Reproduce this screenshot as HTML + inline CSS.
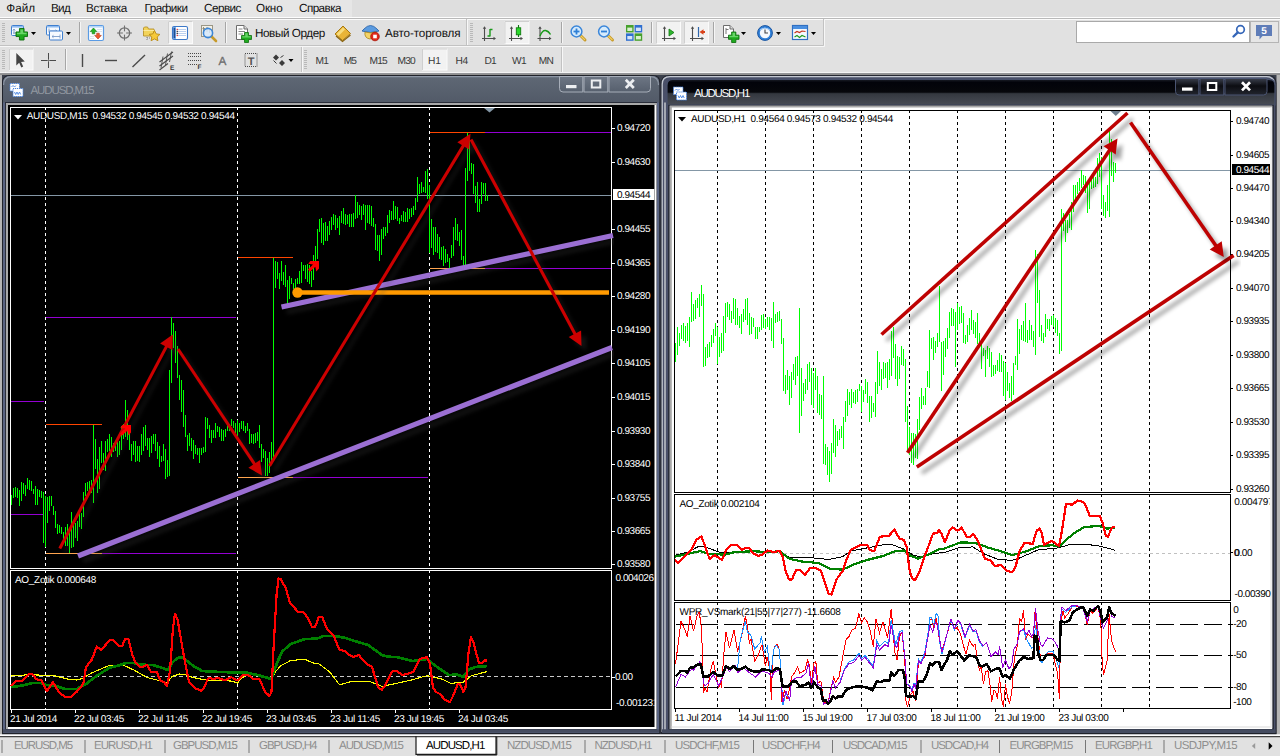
<!DOCTYPE html>
<html><head><meta charset="utf-8"><title>MetaTrader 4</title>
<style>
html,body{margin:0;padding:0;}
body{text-rendering:geometricPrecision;width:1280px;height:756px;overflow:hidden;background:#e1e1e1;position:relative;font-family:"Liberation Sans",sans-serif;}
svg text{font-family:"Liberation Sans",sans-serif;text-rendering:geometricPrecision;}
.abs{position:absolute;}
#menubar{z-index:2;left:0;top:0;width:1280px;height:17px;background:#dedede;}
#menubar .m{position:absolute;z-index:3;top:1px;font-size:11.7px;line-height:15px;color:#111;white-space:nowrap;}
#menuL{position:absolute;left:0;top:0;width:352px;height:17px;background:#e6e6e6;}
#tb{left:0;top:18px;width:1280px;height:55px;background:#e1e1e1;}
.tbtxt{position:absolute;z-index:3;font-size:11.7px;line-height:14px;color:#111;white-space:nowrap;}
.tf{position:absolute;z-index:3;top:55.8px;font-size:10.2px;line-height:12px;color:#3a3a3a;white-space:nowrap;}
#tabs{left:0;top:736px;width:1280px;height:20px;background:#e1e1e1;}
.tab{position:absolute;top:3px;font-size:11px;line-height:14px;color:#8a8a8a;white-space:nowrap;}
.sep{position:absolute;top:3px;width:1px;height:13px;background:#6e6e6e;}
</style></head><body>

<div id="menubar" class="abs"><div id="menuL"></div>
<span class="m" style="left:6.3px;letter-spacing:-0.016px">Файл</span>
<span class="m" style="left:51.0px;letter-spacing:-0.722px">Вид</span>
<span class="m" style="left:86.0px;letter-spacing:-0.355px">Вставка</span>
<span class="m" style="left:144.5px;letter-spacing:-0.501px">Графики</span>
<span class="m" style="left:204.0px;letter-spacing:-0.511px">Сервис</span>
<span class="m" style="left:256.0px;letter-spacing:-0.172px">Окно</span>
<span class="m" style="left:299.0px;letter-spacing:-0.557px">Справка</span>
</div>
<div id="tb" class="abs"></div>
<span class="tbtxt" style="left:255px;top:27px;letter-spacing:-0.413px">Новый Ордер</span>
<span class="tbtxt" style="left:385px;top:27px;letter-spacing:-0.135px">Авто-торговля</span>
<span class="tf" style="left:315.5px;letter-spacing:-0.835px">M1</span>
<span class="tf" style="left:343.7px;letter-spacing:-0.935px">M5</span>
<span class="tf" style="left:369.5px;letter-spacing:-0.781px">M15</span>
<span class="tf" style="left:397.5px;letter-spacing:-0.781px">M30</span>
<span class="tf" style="left:428.0px;letter-spacing:-0.169px">H1</span>
<span class="tf" style="left:455.5px;letter-spacing:-0.269px">H4</span>
<span class="tf" style="left:484.5px;letter-spacing:-0.769px">D1</span>
<span class="tf" style="left:512.0px;letter-spacing:-0.650px">W1</span>
<span class="tf" style="left:538.7px;letter-spacing:-0.781px">MN</span>
<div id="tabs" class="abs"></div>
<svg class="abs" style="left:0;top:0" width="1280" height="756" viewBox="0 0 1280 756">
<defs>
<filter id="shw" x="-10%" y="-10%" width="130%" height="130%"><feGaussianBlur in="SourceGraphic" stdDeviation="1.9"/></filter>
<linearGradient id="tInact" x1="0" y1="0" x2="0" y2="1"><stop offset="0" stop-color="#5f6875"/><stop offset="1" stop-color="#525a68"/></linearGradient>
<linearGradient id="tAct" x1="0" y1="0" x2="0" y2="1"><stop offset="0" stop-color="#1c1f28"/><stop offset="0.12" stop-color="#02030a"/><stop offset="0.5" stop-color="#06070b"/><stop offset="0.56" stop-color="#34383f"/><stop offset="1" stop-color="#484c55"/></linearGradient>
<linearGradient id="btnI" x1="0" y1="0" x2="0" y2="1"><stop offset="0" stop-color="#6d7684"/><stop offset="1" stop-color="#565f6d"/></linearGradient>
<linearGradient id="btnA" x1="0" y1="0" x2="0" y2="1"><stop offset="0" stop-color="#3a3f4c"/><stop offset="0.45" stop-color="#0c0d12"/><stop offset="1" stop-color="#22252e"/></linearGradient>
</defs>
<rect x="0" y="17" width="1280" height="1" fill="#fdfdfd"/><rect x="0" y="18" width="1280" height="1" fill="#b9b9b9"/><rect x="0" y="19" width="1280" height="1" fill="#fbfbfb"/><path d="M0 45.5 H823.5 V19" fill="none" stroke="#c2c2c2" stroke-width="1"/><path d="M0 46.5 H824.5 V19" fill="none" stroke="#f7f7f7" stroke-width="1"/><path d="M466.5 19 V45" stroke="#c2c2c2"/><path d="M467.5 19 V45" stroke="#f7f7f7"/><path d="M301.5 47 V72" stroke="#c2c2c2"/><path d="M302.5 47 V72" stroke="#f7f7f7"/><path d="M561.5 47 V72" stroke="#c2c2c2"/><path d="M562.5 47 V72" stroke="#f7f7f7"/><rect x="2.0" y="23.0" width="3" height="1" fill="#b9b9b9"/><rect x="2.0" y="25.0" width="3" height="1" fill="#b9b9b9"/><rect x="2.0" y="27.0" width="3" height="1" fill="#b9b9b9"/><rect x="2.0" y="29.0" width="3" height="1" fill="#b9b9b9"/><rect x="2.0" y="31.0" width="3" height="1" fill="#b9b9b9"/><rect x="2.0" y="33.0" width="3" height="1" fill="#b9b9b9"/><rect x="2.0" y="35.0" width="3" height="1" fill="#b9b9b9"/><rect x="2.0" y="37.0" width="3" height="1" fill="#b9b9b9"/><rect x="2.0" y="39.0" width="3" height="1" fill="#b9b9b9"/><rect x="2.0" y="41.0" width="3" height="1" fill="#b9b9b9"/><rect x="470.0" y="23.0" width="3" height="1" fill="#b9b9b9"/><rect x="470.0" y="25.0" width="3" height="1" fill="#b9b9b9"/><rect x="470.0" y="27.0" width="3" height="1" fill="#b9b9b9"/><rect x="470.0" y="29.0" width="3" height="1" fill="#b9b9b9"/><rect x="470.0" y="31.0" width="3" height="1" fill="#b9b9b9"/><rect x="470.0" y="33.0" width="3" height="1" fill="#b9b9b9"/><rect x="470.0" y="35.0" width="3" height="1" fill="#b9b9b9"/><rect x="470.0" y="37.0" width="3" height="1" fill="#b9b9b9"/><rect x="470.0" y="39.0" width="3" height="1" fill="#b9b9b9"/><rect x="470.0" y="41.0" width="3" height="1" fill="#b9b9b9"/><rect x="2.0" y="50.0" width="3" height="1" fill="#b9b9b9"/><rect x="2.0" y="52.0" width="3" height="1" fill="#b9b9b9"/><rect x="2.0" y="54.0" width="3" height="1" fill="#b9b9b9"/><rect x="2.0" y="56.0" width="3" height="1" fill="#b9b9b9"/><rect x="2.0" y="58.0" width="3" height="1" fill="#b9b9b9"/><rect x="2.0" y="60.0" width="3" height="1" fill="#b9b9b9"/><rect x="2.0" y="62.0" width="3" height="1" fill="#b9b9b9"/><rect x="2.0" y="64.0" width="3" height="1" fill="#b9b9b9"/><rect x="2.0" y="66.0" width="3" height="1" fill="#b9b9b9"/><rect x="2.0" y="68.0" width="3" height="1" fill="#b9b9b9"/><rect x="304.0" y="50.0" width="3" height="1" fill="#b9b9b9"/><rect x="304.0" y="52.0" width="3" height="1" fill="#b9b9b9"/><rect x="304.0" y="54.0" width="3" height="1" fill="#b9b9b9"/><rect x="304.0" y="56.0" width="3" height="1" fill="#b9b9b9"/><rect x="304.0" y="58.0" width="3" height="1" fill="#b9b9b9"/><rect x="304.0" y="60.0" width="3" height="1" fill="#b9b9b9"/><rect x="304.0" y="62.0" width="3" height="1" fill="#b9b9b9"/><rect x="304.0" y="64.0" width="3" height="1" fill="#b9b9b9"/><rect x="304.0" y="66.0" width="3" height="1" fill="#b9b9b9"/><rect x="304.0" y="68.0" width="3" height="1" fill="#b9b9b9"/><rect x="79.0" y="22.0" width="1" height="21.0" fill="#a6a6a6"/><rect x="80.0" y="22.0" width="1" height="21.0" fill="#f6f6f6"/><rect x="225.0" y="22.0" width="1" height="21.0" fill="#a6a6a6"/><rect x="226.0" y="22.0" width="1" height="21.0" fill="#f6f6f6"/><rect x="561.0" y="22.0" width="1" height="21.0" fill="#a6a6a6"/><rect x="562.0" y="22.0" width="1" height="21.0" fill="#f6f6f6"/><rect x="651.0" y="22.0" width="1" height="21.0" fill="#a6a6a6"/><rect x="652.0" y="22.0" width="1" height="21.0" fill="#f6f6f6"/><rect x="713.0" y="22.0" width="1" height="21.0" fill="#a6a6a6"/><rect x="714.0" y="22.0" width="1" height="21.0" fill="#f6f6f6"/><rect x="65.0" y="49.0" width="1" height="21.0" fill="#a6a6a6"/><rect x="66.0" y="49.0" width="1" height="21.0" fill="#f6f6f6"/><rect x="168.5" y="21.5" width="24.0" height="22.0" fill="#f2f2f2" stroke="#fbfbfb" stroke-width="1"/><path d="M168.5 43.5 V21.5 H192.5" fill="none" stroke="#cfcfcf" stroke-width="1"/><rect x="505.0" y="21.5" width="24.0" height="22.0" fill="#f2f2f2" stroke="#fbfbfb" stroke-width="1"/><path d="M505.0 43.5 V21.5 H529.0" fill="none" stroke="#cfcfcf" stroke-width="1"/><rect x="656.5" y="21.5" width="24.0" height="22.0" fill="#f2f2f2" stroke="#fbfbfb" stroke-width="1"/><path d="M656.5 43.5 V21.5 H680.5" fill="none" stroke="#cfcfcf" stroke-width="1"/><rect x="684.5" y="21.5" width="24.0" height="22.0" fill="#f2f2f2" stroke="#fbfbfb" stroke-width="1"/><path d="M684.5 43.5 V21.5 H708.5" fill="none" stroke="#cfcfcf" stroke-width="1"/><rect x="9.5" y="49.0" width="23.5" height="21.0" fill="#f2f2f2" stroke="#fbfbfb" stroke-width="1"/><path d="M9.5 70.0 V49.0 H33.0" fill="none" stroke="#cfcfcf" stroke-width="1"/><rect x="422.5" y="49.0" width="24.5" height="21.0" fill="#f2f2f2" stroke="#fbfbfb" stroke-width="1"/><path d="M422.5 70.0 V49.0 H447.0" fill="none" stroke="#cfcfcf" stroke-width="1"/><g transform="translate(11.0,25.0)"><rect x="0.5" y="0.5" width="12" height="10" rx="1" fill="#f6faff" stroke="#3f7fcf"/><rect x="1" y="1" width="11" height="1.6" fill="#8dbaf0"/><path d="M3 4 V9 M1.8 5.5 L3 4 L4.2 5.5 M2 8 H6" stroke="#7d9cc8" stroke-width="0.9" fill="none"/><g transform="translate(5.0,3.5) scale(1.15)"><path d="M3 0 h4 v3 h3 v4 h-3 v3 h-4 v-3 h-3 v-4 h3 z" fill="#1faa1f" stroke="#0c6e0c" stroke-width="0.8"/><path d="M3.8 0.8 h2.4 v3 h3 v1.2 h-8.4 v-1.2 h3 z" fill="#7be07b" opacity="0.8"/></g></g><path d="M31.0 32.0 h5 l-2.5 3 z" fill="#000"/><g transform="translate(46.0,25.0)"><rect x="0.5" y="0.5" width="13" height="9.5" rx="1" fill="#f6faff" stroke="#3f7fcf"/><rect x="1" y="1" width="12" height="1.5" fill="#8dbaf0"/><path d="M3 6 H11 M3 3.5 V7.5 M9.5 4.8 L11 6 L9.5 7.2" stroke="#7d9cc8" stroke-width="0.9" fill="none"/><rect x="3.5" y="6" width="13" height="9" rx="1" fill="#f6faff" stroke="#3f7fcf"/><path d="M6 11.5 H14 M14 9.5 V13.5 M7.5 10.3 L6 11.5 L7.5 12.7" stroke="#7d9cc8" stroke-width="0.9" fill="none"/></g><path d="M66.0 32.0 h5 l-2.5 3 z" fill="#000"/><g transform="translate(88.0,25.0)"><rect x="0.5" y="0.5" width="15" height="15" rx="1.5" fill="#fbfdff" stroke="#5a9be4" stroke-width="1.2"/><rect x="1.2" y="1.2" width="13.6" height="1.3" fill="#a9cdf5"/><path d="M9 4.5 H14 M9 6.5 H14 M2 11.5 H6 M2 13.5 H6" stroke="#d5dde8" stroke-width="0.8"/><path d="M5.5 3 l-3.3 3.6 h2 v2.2 h2.6 v-2.2 h2 z" fill="#22b422" stroke="#0d7b0d" stroke-width="0.6"/><path d="M10 14 l-3.3 -3.6 h2 v-2.2 h2.6 v2.2 h2 z" fill="#f0562c" stroke="#b03412" stroke-width="0.6"/></g><g transform="translate(117.0,25.5)"><circle cx="7.5" cy="7.5" r="5.2" fill="none" stroke="#707070" stroke-width="1.3"/><path d="M7.5 0 V15 M0 7.5 H15" stroke="#707070" stroke-width="1.1"/><circle cx="7.5" cy="7.5" r="1.8" fill="#e1e1e1"/></g><g transform="translate(143.0,25.0)"><path d="M0.5 3 V11 H11 V4 H5.5 L4.5 2 H1.5 Z" fill="#f2d35a" stroke="#b8922a" stroke-width="0.9"/><path d="M0.5 5.5 H11" stroke="#fbe89a" stroke-width="1"/><path d="M4 12 V15 M4 13 H7" stroke="#777" stroke-width="0.9" stroke-dasharray="1 1"/><path d="M11.5 5.5 l1.7 3.4 3.7 .5 -2.7 2.6 .7 3.7 -3.4 -1.8 -3.4 1.8 .7 -3.7 -2.7 -2.6 3.7 -.5 z" fill="#f6c93a" stroke="#b98a14" stroke-width="0.9"/></g><g transform="translate(172.0,26.0)"><rect x="0.5" y="0.5" width="15" height="13" rx="1.5" fill="#fff" stroke="#3b78c8" stroke-width="1.1"/><rect x="1.2" y="1.2" width="2.6" height="11.6" fill="#3d83d8"/><rect x="1.8" y="2" width="1" height="10" fill="#1c3f78"/><path d="M6 3.5 H14 M6 5.5 H14 M6 7.5 H14 M6 9.5 H14" stroke="#a9c4ea" stroke-width="0.8"/><rect x="4.6" y="2.8" width="1.3" height="1.3" fill="#d33"/><rect x="4.6" y="4.8" width="1.3" height="1.3" fill="#333"/><rect x="4.6" y="6.8" width="1.3" height="1.3" fill="#333"/><rect x="4.6" y="8.8" width="1.3" height="1.3" fill="#d33"/></g><g transform="translate(200.0,25.0)"><rect x="1.5" y="0.5" width="11" height="11" fill="#f3f0e6" stroke="#9a9685"/><path d="M3.5 2 V9 M2.5 3.5 H5 M7 2 V7 M9.5 3 V8" stroke="#8a8672" stroke-width="0.9"/><path d="M11 11 L16 16" stroke="#c79a2a" stroke-width="2.6" stroke-linecap="round"/><circle cx="8" cy="8" r="4.6" fill="#d6e9fb" fill-opacity="0.85" stroke="#3b86d8" stroke-width="1.6"/></g><g transform="translate(235.0,25.0)"><path d="M1.5 0.5 H9 L12.5 4 V14.5 H1.5 Z" fill="#fff" stroke="#6d6d6d"/><path d="M9 0.5 V4 H12.5" fill="#ddd" stroke="#6d6d6d"/><path d="M3.5 4 H7.5 M3.5 6.5 H10 M3.5 9 H8" stroke="#888" stroke-width="1"/><g transform="translate(6.5,7.5) scale(1.00)"><path d="M3 0 h4 v3 h3 v4 h-3 v3 h-4 v-3 h-3 v-4 h3 z" fill="#1faa1f" stroke="#0c6e0c" stroke-width="0.8"/><path d="M3.8 0.8 h2.4 v3 h3 v1.2 h-8.4 v-1.2 h3 z" fill="#7be07b" opacity="0.8"/></g></g><g transform="translate(334.0,25.0)"><path d="M1 9 L9 1 L16.5 8.5 L8.5 15.5 Z" fill="#e9b437" stroke="#a67912" stroke-width="1"/><path d="M2.5 9 L9 2.6 L11 4.4 L4.5 11 Z" fill="#f7dc7e"/><path d="M2 11 L8.5 16.5 L16.5 10" fill="none" stroke="#8a6410" stroke-width="1.2"/></g><g transform="translate(362.0,24.0)"><path d="M2 5 Q8.5 -2 15 5 L17 7 Q8.5 10 0 7 Z" fill="#5b9be0" stroke="#2d66ad" stroke-width="0.9"/><path d="M3 8 Q2 14 8 15 Q14 14 14 8 Q8.5 9.8 3 8Z" fill="#f3d46a" stroke="#b08d24" stroke-width="0.9"/><circle cx="13" cy="12.5" r="4.3" fill="#e02a1a" stroke="#a81408" stroke-width="0.8"/><rect x="11.2" y="10.7" width="3.6" height="3.6" fill="#fff"/></g><g transform="translate(481.0,26.0)"><path d="M3.5 1.5 V15 M1 12.5 H14" stroke="#4d4d4d" stroke-width="1.1" fill="none"/><path d="M3.5 0.3 l-1.7 2.5 h3.4 z M15 12.5 l-2.5 -1.7 v3.4 z" fill="#4d4d4d"/><path d="M9 3 V10.5 M9 3.5 H11.5 M6.5 10 H9" stroke="#1a9a1a" stroke-width="1.4" fill="none"/></g><g transform="translate(508.0,26.0)"><path d="M3.5 1.5 V15 M1 12.5 H14" stroke="#4d4d4d" stroke-width="1.1" fill="none"/><path d="M3.5 0.3 l-1.7 2.5 h3.4 z M15 12.5 l-2.5 -1.7 v3.4 z" fill="#4d4d4d"/><path d="M10.5 -1 V11" stroke="#0f7a0f" stroke-width="1.1"/><rect x="8.3" y="1.8" width="4.4" height="7" fill="#2ad82a" stroke="#0f7a0f" stroke-width="0.9"/></g><g transform="translate(536.5,26.0)"><path d="M3.5 1.5 V15 M1 12.5 H14" stroke="#4d4d4d" stroke-width="1.1" fill="none"/><path d="M3.5 0.3 l-1.7 2.5 h3.4 z M15 12.5 l-2.5 -1.7 v3.4 z" fill="#4d4d4d"/><path d="M3.5 10 Q6 4 9 4.5 T14 8.5" stroke="#1a9a1a" stroke-width="1.4" fill="none"/></g><g transform="translate(570.0,25.0)"><path d="M10 10 L15 15" stroke="#c79a2a" stroke-width="3" stroke-linecap="round"/><path d="M10.3 10.3 L14.6 14.6" stroke="#f3d264" stroke-width="1.2" stroke-linecap="round"/><circle cx="6.5" cy="6.5" r="5.4" fill="#d6ebfc" stroke="#3a86da" stroke-width="1.5"/><path d="M3.5 6.5 H9.5" stroke="#2f7fd6" stroke-width="1.8"/><path d="M6.5 3.5 V9.5" stroke="#2f7fd6" stroke-width="1.8"/></g><g transform="translate(597.5,25.0)"><path d="M10 10 L15 15" stroke="#c79a2a" stroke-width="3" stroke-linecap="round"/><path d="M10.3 10.3 L14.6 14.6" stroke="#f3d264" stroke-width="1.2" stroke-linecap="round"/><circle cx="6.5" cy="6.5" r="5.4" fill="#d6ebfc" stroke="#3a86da" stroke-width="1.5"/><path d="M3.5 6.5 H9.5" stroke="#2f7fd6" stroke-width="1.8"/></g><g transform="translate(626.0,25.0)"><rect x="0" y="0" width="7.6" height="7.4" fill="#46a12c"/><rect x="8.6" y="0" width="7.6" height="7.4" fill="#2f6fd0"/><rect x="0" y="8.4" width="7.6" height="7.4" fill="#2f6fd0"/><rect x="8.6" y="8.4" width="7.6" height="7.4" fill="#46a12c"/><rect x="1.3" y="2.6" width="5" height="3.4" fill="#d9efcf"/><rect x="9.9" y="2.6" width="5" height="3.4" fill="#d6e4f8"/><rect x="1.3" y="11" width="5" height="3.4" fill="#d6e4f8"/><rect x="9.9" y="11" width="5" height="3.4" fill="#d9efcf"/></g><g transform="translate(661.0,26.0)"><path d="M3.5 1.5 V15 M1 12.5 H14" stroke="#4d4d4d" stroke-width="1.1" fill="none"/><path d="M3.5 0.3 l-1.7 2.5 h3.4 z M15 12.5 l-2.5 -1.7 v3.4 z" fill="#4d4d4d"/><path d="M8 3 V10 L13 6.5 Z" fill="#2fb52f" stroke="#107a10" stroke-width="0.8"/></g><g transform="translate(689.0,26.0)"><path d="M3.5 1.5 V15 M1 12.5 H14" stroke="#4d4d4d" stroke-width="1.1" fill="none"/><path d="M3.5 0.3 l-1.7 2.5 h3.4 z M15 12.5 l-2.5 -1.7 v3.4 z" fill="#4d4d4d"/><path d="M9.5 1 V11" stroke="#2d66ad" stroke-width="1.2"/><path d="M10.5 6 L14.5 3.2 V5 H16 V7 H14.5 V8.8 Z" fill="#d9421a"/></g><g transform="translate(722.0,25.0)"><path d="M1.5 0.5 H8 L11.5 4 V12.5 H1.5 Z" fill="#fff" stroke="#6d6d6d"/><path d="M8 0.5 V4 H11.5" fill="#ddd" stroke="#6d6d6d"/><path d="M4 3 V9 M4 4.5 H6.5" stroke="#777" stroke-width="1"/><g transform="translate(6.5,7.0) scale(1.05)"><path d="M3 0 h4 v3 h3 v4 h-3 v3 h-4 v-3 h-3 v-4 h3 z" fill="#1faa1f" stroke="#0c6e0c" stroke-width="0.8"/><path d="M3.8 0.8 h2.4 v3 h3 v1.2 h-8.4 v-1.2 h3 z" fill="#7be07b" opacity="0.8"/></g></g><path d="M741.0 32.0 h5 l-2.5 3 z" fill="#000"/><g transform="translate(757.0,25.0)"><circle cx="8" cy="8" r="7.4" fill="#2f7fd8" stroke="#1a55a0" stroke-width="1"/><circle cx="8" cy="8" r="5.2" fill="#f4f8fc"/><path d="M8 4.5 V8 H11" stroke="#444" stroke-width="1.1" fill="none"/><path d="M3 5 Q8 1.5 13 5" stroke="#9cc6f3" stroke-width="1.2" fill="none"/></g><path d="M776.0 32.0 h5 l-2.5 3 z" fill="#000"/><g transform="translate(792.0,25.0)"><rect x="0.5" y="0.5" width="15" height="14" fill="#f4f9ff" stroke="#2f6fc2" stroke-width="1.2"/><rect x="1" y="1" width="14" height="3" fill="#4a8fe0"/><path d="M2.5 8 L5 6.5 L7.5 7.5 L10 6 L13.5 6.5" stroke="#c8321a" stroke-width="1.2" fill="none"/><path d="M2.5 12 L5 10.5 L7.5 12.5 L10 10.5 L13.5 12" stroke="#1f9a1f" stroke-width="1.2" fill="none"/></g><path d="M811.0 32.0 h5 l-2.5 3 z" fill="#000"/><rect x="1076.5" y="21.5" width="173" height="21" fill="#fff" stroke="#a9a9a9"/><rect x="1250.5" y="21.5" width="28" height="21" fill="#e6e6e6" stroke="#b5b5b5"/><g transform="translate(1232.0,24.0)"><circle cx="8.5" cy="5.5" r="3.8" fill="#fff" stroke="#3566b8" stroke-width="1.7"/><path d="M5.8 8.4 L1.5 12.5" stroke="#3566b8" stroke-width="2.4" stroke-linecap="round"/></g><g transform="translate(1256.0,25.0)"><path d="M0 0 H16 V11 H6.5 L3.5 14.5 V11 H0 Z" fill="#5f7db8"/><text x="8" y="9.3" font-size="10" font-weight="bold" fill="#fff" text-anchor="middle">5</text></g><path d="M16.3 53 V65.5 L19.2 62.8 L21.3 67.5 L23.2 66.6 L21.1 62 L24.8 61.5 Z" fill="#444"/><g shape-rendering="crispEdges"><path d="M48.5 53 V68 M41 60.5 H56" stroke="#4a4a4a" stroke-width="1"/><rect x="47" y="59" width="3" height="3" fill="#e1e1e1"/><path d="M48.5 59 V62 M47 60.5 H50" stroke="#777" stroke-width="1"/></g><path d="M82.5 54 V67" stroke="#4a4a4a" stroke-width="1.4"/><path d="M105 60.5 H117" stroke="#4a4a4a" stroke-width="1.4"/><path d="M132.5 67 L145 55" stroke="#4a4a4a" stroke-width="1.4"/><path d="M159.5 66 L173 56 M159.5 62 L173 52 M159.5 70 L168 63.5" stroke="#4a4a4a" stroke-width="1.1" fill="none"/><path d="M163 56.5 L161 68 M167.5 53.5 L165.5 65 M171.5 51.5 L169.5 62" stroke="#4a4a4a" stroke-width="0.9"/><text x="170" y="70" font-size="6.5" font-weight="bold" fill="#333">E</text><path d="M188 53.5 H201 M188 56.5 H201 M188 60.5 H201 M188 64.5 H197" stroke="#4a4a4a" stroke-width="1" stroke-dasharray="1 1" shape-rendering="crispEdges"/><text x="197.5" y="69" font-size="6.5" font-weight="bold" fill="#333">F</text><text x="218.5" y="64.6" font-size="11.8" fill="#6e6e6e" stroke="#6e6e6e" stroke-width="0.3">A</text><rect x="245" y="53.5" width="12" height="13" fill="none" stroke="#4a4a4a" stroke-width="1" stroke-dasharray="1 1"/><text x="251" y="64.5" font-size="11" font-weight="bold" fill="#555" text-anchor="middle">T</text><path d="M273 57.5 l3 -3 3 3 -3 3 z M279 63 l3 -3 3 3 -3 3z" fill="#3a3a3a"/><path d="M273.5 60.5 l3 3 M280.5 57.5 l3 -2" stroke="#3a3a3a" stroke-width="1"/><path d="M288.5 59.0 h5 l-2.5 3 z" fill="#000"/>
<rect x="1.5" y="740" width="1" height="13" fill="#777"/><rect x="84.5" y="740" width="1" height="13" fill="#777"/><rect x="164.5" y="740" width="1" height="13" fill="#777"/><rect x="248.5" y="740" width="1" height="13" fill="#777"/><rect x="328.5" y="740" width="1" height="13" fill="#777"/><rect x="584.5" y="740" width="1" height="13" fill="#777"/><rect x="664.5" y="740" width="1" height="13" fill="#777"/><rect x="753.0" y="740" width="1" height="13" fill="#777"/><rect x="832.0" y="740" width="1" height="13" fill="#777"/><rect x="920.5" y="740" width="1" height="13" fill="#777"/><rect x="999.0" y="740" width="1" height="13" fill="#777"/><rect x="1085.0" y="740" width="1" height="13" fill="#777"/><rect x="1163.5" y="740" width="1" height="13" fill="#777"/><rect x="416" y="735" width="80" height="19" fill="#fff"/><path d="M416 736 V754.3 H496 V736" fill="none" stroke="#1a1a1a" stroke-width="1.2"/><path d="M417 755 H496.8 V737" fill="none" stroke="#1a1a1a" stroke-width="1"/><text x="14.0" y="749" font-size="11.5" fill="#8e8e8e" letter-spacing="-1.081">EURUSD,M5</text><text x="94.0" y="749" font-size="11.5" fill="#8e8e8e" letter-spacing="-0.940">EURUSD,H1</text><text x="173.0" y="749" font-size="11.5" fill="#8e8e8e" letter-spacing="-1.013">GBPUSD,M15</text><text x="259.0" y="749" font-size="11.5" fill="#8e8e8e" letter-spacing="-0.996">GBPUSD,H4</text><text x="339.0" y="749" font-size="11.5" fill="#8e8e8e" letter-spacing="-1.013">AUDUSD,M15</text><text x="426.0" y="749" font-size="11.5" fill="#000" letter-spacing="-0.884">AUDUSD,H1</text><text x="507.0" y="749" font-size="11.5" fill="#8e8e8e" letter-spacing="-0.948">NZDUSD,M15</text><text x="594.5" y="749" font-size="11.5" fill="#8e8e8e" letter-spacing="-0.979">NZDUSD,H1</text><text x="675.0" y="749" font-size="11.5" fill="#8e8e8e" letter-spacing="-0.821">USDCHF,M15</text><text x="762.0" y="749" font-size="11.5" fill="#8e8e8e" letter-spacing="-0.726">USDCHF,H4</text><text x="843.0" y="749" font-size="11.5" fill="#8e8e8e" letter-spacing="-1.063">USDCAD,M15</text><text x="931.0" y="749" font-size="11.5" fill="#8e8e8e" letter-spacing="-1.051">USDCAD,H4</text><text x="1009.5" y="749" font-size="11.5" fill="#8e8e8e" letter-spacing="-0.965">EURGBP,M15</text><text x="1095.0" y="749" font-size="11.5" fill="#8e8e8e" letter-spacing="-0.887">EURGBP,H1</text><text x="1174.0" y="749" font-size="11.5" fill="#8e8e8e" letter-spacing="-0.645">USDJPY,M15</text><path d="M1251.8 746 l3.4 -3 v6 z" fill="#9a9a9a"/><path d="M1272.5 746 l-3.8 -3.8 v7.6 z" fill="#000"/>
<rect x="0" y="73" width="1280" height="663" fill="#3a3f4b"/>
<rect x="0" y="72" width="1280" height="1.5" fill="#f4f4f4"/>
<rect x="0" y="73.5" width="1280" height="1.5" fill="#8f8f8f"/>
<rect x="0" y="75" width="2" height="660" fill="#b4b4b4"/>
<rect x="1276.5" y="75" width="3.5" height="660" fill="#b4b4b4"/>
<rect x="0" y="734.3" width="1280" height="1.9" fill="#fdfdfd"/>
<rect x="0" y="736.2" width="1280" height="1" fill="#1a1a1a"/>
<path d="M2.0 734.0 V83.0 Q2.0 75.0 10.0 75.0 H652.5 Q660.5 75.0 660.5 83.0 V734.0 Z" fill="#20232b"/>
<path d="M3.0 733.0 V83.0 Q3.0 76.0 10.0 76.0 H652.2 Q659.2 76.0 659.2 83.0 V733.0 Z" fill="#5a6482"/>
<path d="M3.0 102.5 V83.0 Q3.0 76.0 10.0 76.0 H652.2 Q659.2 76.0 659.2 83.0 V102.5 Z" fill="url(#tInact)"/>
<path d="M3.6 85.0 Q3.6 76.6 11.0 76.6 H650.5 Q658.5 76.6 658.5 85.0" fill="none" stroke="#8d96a4" stroke-width="1.2"/>
<rect x="5" y="102" width="652" height="628" fill="#2a2e3a"/>
<rect x="6" y="103" width="650.5" height="626" fill="#fff"/>
<path d="M6 729 V103 H656.5 V105 H8 V729 Z" fill="#a9a9a9"/>
<rect x="3" y="729.3" width="656" height="3.4" fill="#454c60"/>
<path d="M661.0 734.0 V83.3 Q661.0 75.3 669.0 75.3 H1268.5 Q1276.5 75.3 1276.5 83.3 V734.0 Z" fill="#20232b"/>
<path d="M661.8 733.0 V83.6 Q661.8 76.1 669.3 76.1 H1268.0 Q1275.5 76.1 1275.5 83.6 V733.0 Z" fill="#4a5069"/>
<path d="M662.2 732.0 V84.3 Q662.2 76.7 670.0 76.7 H1266.5 Q1274.5 76.7 1274.5 85.3" fill="none" stroke="#c3c8d1" stroke-width="1.3"/>
<path d="M667.0 105.0 V85.3 Q667.0 79.3 673.0 79.3 H1269.0 Q1275.0 79.3 1275.0 85.3 V105.0 Z" fill="url(#tAct)" stroke="#48516c" stroke-width="1.2"/>
<rect x="664" y="102.5" width="2" height="628" fill="#a4a8b2"/>
<rect x="667" y="104.5" width="1608" height="0" fill="#2a2e3a"/>
<rect x="668" y="104.8" width="606" height="625.5" fill="#2a2e3a"/>
<rect x="669.8" y="105.8" width="602.4" height="623.2" fill="#fff"/>
<path d="M669.8 729 V105.8 H1272.2 V107.6 H671.8 V729 Z" fill="#a9a9a9"/>
<path d="M1270.3 107.6 V726 H671.8 V728 H1272.2 V107.6 Z" fill="#ececec"/>
<rect x="662" y="729.3" width="1613.500" height="0" fill="#454c60"/>
<rect x="662" y="729.3" width="613.5" height="3.4" fill="#454c60"/>
<g transform="translate(9.5,83.0)"><rect x="0.5" y="0.5" width="9.5" height="7.5" fill="#fff" stroke="#4b86e0" stroke-width="1" stroke-dasharray="1.2 0.8"/><path d="M2 4 l1.5 -1.5 1.5 1.5 1.5 -1.5" stroke="#4b86e0" stroke-width="0.9" fill="none"/><rect x="3.5" y="5.5" width="10" height="8" fill="#fff" stroke="#4b86e0" stroke-width="1" stroke-dasharray="1.2 0.8"/><path d="M5 9 l1.2 2.5 1.3 -2.5 1.2 2.5 1.3 -2.5 1.2 2.5" stroke="#4b86e0" stroke-width="0.9" fill="none"/></g><text x="30.5" y="94" font-size="11.5" fill="#9298a1" letter-spacing="-1.113">AUDUSD,M15</text><path d="M559.5 76.5 V88.5 Q559.5 92.0 563.0 92.0 H582.8 V76.5 Z" fill="url(#btnI)" stroke="#a7aeb9" stroke-width="1"/><rect x="584.0" y="76.5" width="23.8" height="15.5" fill="url(#btnI)" stroke="#a7aeb9" stroke-width="1"/><path d="M609.0 76.5 V92.0 H647.0 Q650.5 92.0 650.5 88.5 V76.5 Z" fill="url(#btnI)" stroke="#a7aeb9" stroke-width="1"/><rect x="566.0" y="85.0" width="10.5" height="3.2" fill="#eceef1"/><rect x="591.8" y="80.5" width="8.5" height="7" fill="none" stroke="#eceef1" stroke-width="2"/><path d="M625.8 79.8 l8 8.2 M633.8 79.8 l-8 8.2" stroke="#eceef1" stroke-width="2.7"/><g transform="translate(673.0,86.5)"><rect x="0.5" y="0.5" width="9.5" height="7.5" fill="#fff" stroke="#4b86e0" stroke-width="1" stroke-dasharray="1.2 0.8"/><path d="M2 4 l1.5 -1.5 1.5 1.5 1.5 -1.5" stroke="#4b86e0" stroke-width="0.9" fill="none"/><rect x="3.5" y="5.5" width="10" height="8" fill="#fff" stroke="#4b86e0" stroke-width="1" stroke-dasharray="1.2 0.8"/><path d="M5 9 l1.2 2.5 1.3 -2.5 1.2 2.5 1.3 -2.5 1.2 2.5" stroke="#4b86e0" stroke-width="0.9" fill="none"/></g><text x="694" y="97" font-size="11.5" fill="#fff" letter-spacing="-1.273">AUDUSD,H1</text><path d="M1175.5 78.5 V91.5 Q1175.5 95.0 1179.0 95.0 H1198.8 V78.5 Z" fill="url(#btnA)" stroke="#4b5572" stroke-width="1"/><rect x="1200.0" y="78.5" width="23.8" height="16.5" fill="url(#btnA)" stroke="#4b5572" stroke-width="1"/><path d="M1225.0 78.5 V95.0 H1263.5 Q1267.0 95.0 1267.0 91.5 V78.5 Z" fill="url(#btnA)" stroke="#4b5572" stroke-width="1"/><rect x="1182.0" y="87.5" width="10.5" height="3.2" fill="#fff"/><rect x="1207.8" y="83.0" width="8.5" height="7" fill="none" stroke="#fff" stroke-width="2"/><path d="M1242.0 82.2 l8 8.2 M1250.0 82.2 l-8 8.2" stroke="#fff" stroke-width="2.7"/>
<rect x="8.0" y="105.0" width="646.5" height="622.0" fill="#000"/>
<g shape-rendering="crispEdges">
<path d="M10.5 107.5 H611.5 V568.5 H10.5 Z" fill="none" stroke="#fff" stroke-width="1"/>
<path d="M10.5 570.5 H611.5 V709.5 H10.5 Z" fill="none" stroke="#fff" stroke-width="1"/>
<line x1="45.5" y1="107" x2="45.5" y2="568" stroke="#fff" stroke-width="1" stroke-dasharray="3 3"/>
<line x1="45.5" y1="570" x2="45.5" y2="709" stroke="#fff" stroke-width="1" stroke-dasharray="3 3"/>
<line x1="237.5" y1="107" x2="237.5" y2="568" stroke="#fff" stroke-width="1" stroke-dasharray="3 3"/>
<line x1="237.5" y1="570" x2="237.5" y2="709" stroke="#fff" stroke-width="1" stroke-dasharray="3 3"/>
<line x1="429.5" y1="107" x2="429.5" y2="568" stroke="#fff" stroke-width="1" stroke-dasharray="3 3"/>
<line x1="429.5" y1="570" x2="429.5" y2="709" stroke="#fff" stroke-width="1" stroke-dasharray="3 3"/>
<line x1="11" y1="195.5" x2="611" y2="195.5" stroke="#8497a6" stroke-width="1"/>
<line x1="11.0" y1="401.5" x2="44.0" y2="401.5" stroke="#9400d3" stroke-width="1"/>
<line x1="11.0" y1="514.5" x2="44.0" y2="514.5" stroke="#9400d3" stroke-width="1"/>
<line x1="46.0" y1="317.5" x2="236.0" y2="317.5" stroke="#9400d3" stroke-width="1"/>
<line x1="46.0" y1="553.5" x2="236.0" y2="553.5" stroke="#9400d3" stroke-width="1"/>
<line x1="46.0" y1="553.5" x2="102.0" y2="553.5" stroke="#ffa54f" stroke-width="1"/>
<line x1="46.0" y1="424.5" x2="102.0" y2="424.5" stroke="#ff4500" stroke-width="1"/>
<line x1="238.0" y1="257.5" x2="293.0" y2="257.5" stroke="#ff4500" stroke-width="1"/>
<line x1="238.0" y1="477.5" x2="293.0" y2="477.5" stroke="#ffa54f" stroke-width="1"/>
<line x1="293.0" y1="477.5" x2="428.0" y2="477.5" stroke="#9400d3" stroke-width="1"/>
<line x1="430.0" y1="132.5" x2="485.0" y2="132.5" stroke="#ff4500" stroke-width="1"/>
<line x1="485.0" y1="132.5" x2="611.0" y2="132.5" stroke="#9400d3" stroke-width="1"/>
<line x1="430.0" y1="268.5" x2="485.0" y2="268.5" stroke="#ffa54f" stroke-width="1"/>
<line x1="485.0" y1="268.5" x2="611.0" y2="268.5" stroke="#9400d3" stroke-width="1"/>
<path d="M11.5 495V505M13.5 488V498M15.5 487V497M17.5 488V498M19.5 490V506M21.5 482V501M23.5 483V494M25.5 485V496M27.5 478V489M29.5 480V490M31.5 481V491M33.5 489V494M35.5 486V505M37.5 489V505M39.5 490V497M41.5 491V498M43.5 492V543M45.5 496V547M47.5 497V523M49.5 496V511M51.5 496V506M53.5 506V515M55.5 511V528M57.5 524V534M59.5 525V533M61.5 527V534M63.5 532V539M65.5 527V546M67.5 524V546M69.5 531V553M71.5 512V548M73.5 522V547M75.5 523V538M77.5 521V541M79.5 513V527M81.5 513V529M83.5 492V517M85.5 483V496M87.5 482V491M89.5 481V490M91.5 480V493M93.5 425V503M95.5 439V469M97.5 459V493M99.5 447V489M101.5 441V463M103.5 453V470M105.5 441V471M107.5 439V452M109.5 434V451M111.5 437V457M113.5 443V452M115.5 445V451M117.5 442V457M119.5 441V455M121.5 426V450M123.5 424V439M125.5 400V437M127.5 410V440M129.5 433V450M131.5 444V461M133.5 441V455M135.5 441V462M137.5 446V461M139.5 446V462M141.5 434V455M143.5 427V451M145.5 425V446M147.5 438V450M149.5 438V457M151.5 436V453M153.5 434V444M155.5 434V451M157.5 442V459M159.5 446V467M161.5 456V462M163.5 444V461M165.5 449V479M167.5 460V477M169.5 370V476M171.5 317V383M173.5 323V348M175.5 331V363M177.5 346V378M179.5 375V400M181.5 380V412M183.5 390V427M185.5 415V437M187.5 435V451M189.5 433V446M191.5 438V451M193.5 440V459M195.5 445V454M197.5 448V455M199.5 448V463M201.5 448V455M203.5 447V453M205.5 417V452M207.5 418V429M209.5 425V438M211.5 430V443M213.5 430V438M215.5 423V438M217.5 426V432M219.5 427V437M221.5 429V441M223.5 430V441M225.5 429V437M227.5 423V431M229.5 424V431M231.5 419V426M233.5 421V428M235.5 423V433M237.5 420V436M239.5 423V432M241.5 421V429M243.5 421V431M245.5 426V433M247.5 423V431M249.5 429V444M251.5 434V443M253.5 434V444M255.5 433V443M257.5 432V441M259.5 425V448M261.5 444V462M263.5 449V458M265.5 451V476M267.5 458V476M269.5 452V473M271.5 442V461M273.5 258V461M275.5 261V288M277.5 262V279M279.5 273V289M281.5 261V281M283.5 272V285M285.5 265V287M287.5 280V304M289.5 276V299M291.5 278V284M293.5 283V289M295.5 279V288M297.5 278V284M299.5 271V284M301.5 262V283M303.5 265V271M305.5 265V279M307.5 264V282M309.5 265V284M311.5 271V287M313.5 255V280M315.5 246V261M317.5 229V259M319.5 219V232M321.5 218V243M323.5 223V245M325.5 222V241M327.5 226V241M329.5 221V235M331.5 217V230M333.5 214V225M335.5 215V230M337.5 218V228M339.5 216V235M341.5 211V223M343.5 208V224M345.5 214V225M347.5 215V224M349.5 214V227M351.5 214V227M353.5 213V227M355.5 195V219M357.5 202V218M359.5 205V215M361.5 206V220M363.5 204V215M365.5 205V230M367.5 205V223M369.5 205V224M371.5 206V226M373.5 218V227M375.5 224V250M377.5 235V251M379.5 235V261M381.5 229V255M383.5 227V239M385.5 227V236M387.5 215V233M389.5 210V223M391.5 211V220M393.5 201V220M395.5 206V219M397.5 207V221M399.5 218V224M401.5 215V221M403.5 211V222M405.5 212V222M407.5 208V222M409.5 209V219M411.5 208V217M413.5 206V215M415.5 198V210M417.5 177V202M419.5 184V194M421.5 182V193M423.5 187V192M425.5 171V193M427.5 169V199M429.5 185V253M431.5 219V248M433.5 227V255M435.5 227V252M437.5 234V253M439.5 237V259M441.5 247V260M443.5 246V266M445.5 249V263M447.5 254V262M449.5 258V268M451.5 245V258M453.5 227V256M455.5 218V240M457.5 224V241M459.5 232V246M461.5 230V260M463.5 256V265M465.5 168V266M467.5 133V181M469.5 136V171M471.5 163V174M473.5 164V194M475.5 186V203M477.5 182V212M479.5 199V212M481.5 182V204M483.5 183V194M485.5 183V201M487.5 195V201" stroke="#00ff00" stroke-width="1" fill="none"/>
<line x1="612" y1="128.5" x2="614.5" y2="128.5" stroke="#fff" stroke-width="1"/>
<line x1="612" y1="162.0" x2="614.5" y2="162.0" stroke="#fff" stroke-width="1"/>
<line x1="612" y1="229.5" x2="614.5" y2="229.5" stroke="#fff" stroke-width="1"/>
<line x1="612" y1="263.0" x2="614.5" y2="263.0" stroke="#fff" stroke-width="1"/>
<line x1="612" y1="296.5" x2="614.5" y2="296.5" stroke="#fff" stroke-width="1"/>
<line x1="612" y1="330.5" x2="614.5" y2="330.5" stroke="#fff" stroke-width="1"/>
<line x1="612" y1="363.5" x2="614.5" y2="363.5" stroke="#fff" stroke-width="1"/>
<line x1="612" y1="397.5" x2="614.5" y2="397.5" stroke="#fff" stroke-width="1"/>
<line x1="612" y1="431.0" x2="614.5" y2="431.0" stroke="#fff" stroke-width="1"/>
<line x1="612" y1="464.5" x2="614.5" y2="464.5" stroke="#fff" stroke-width="1"/>
<line x1="612" y1="498.0" x2="614.5" y2="498.0" stroke="#fff" stroke-width="1"/>
<line x1="612" y1="531.5" x2="614.5" y2="531.5" stroke="#fff" stroke-width="1"/>
<line x1="612" y1="564.5" x2="614.5" y2="564.5" stroke="#fff" stroke-width="1"/>
<line x1="612" y1="677.5" x2="614.5" y2="677.5" stroke="#fff"/>
<line x1="11.5" y1="710" x2="11.5" y2="713" stroke="#fff"/>
<line x1="75.5" y1="710" x2="75.5" y2="713" stroke="#fff"/>
<line x1="139.5" y1="710" x2="139.5" y2="713" stroke="#fff"/>
<line x1="203.5" y1="710" x2="203.5" y2="713" stroke="#fff"/>
<line x1="267.5" y1="710" x2="267.5" y2="713" stroke="#fff"/>
<line x1="331.5" y1="710" x2="331.5" y2="713" stroke="#fff"/>
<line x1="395.5" y1="710" x2="395.5" y2="713" stroke="#fff"/>
<line x1="459.5" y1="710" x2="459.5" y2="713" stroke="#fff"/>
</g>
<text x="617.0" y="131" fill="#fff" font-size="10.00" text-anchor="start" font-weight="normal" letter-spacing="-0.450" >0.94720</text>
<text x="617.0" y="165" fill="#fff" font-size="10.00" text-anchor="start" font-weight="normal" letter-spacing="-0.450" >0.94630</text>
<text x="617.0" y="232" fill="#fff" font-size="10.00" text-anchor="start" font-weight="normal" letter-spacing="-0.450" >0.94455</text>
<text x="617.0" y="266" fill="#fff" font-size="10.00" text-anchor="start" font-weight="normal" letter-spacing="-0.450" >0.94365</text>
<text x="617.0" y="299" fill="#fff" font-size="10.00" text-anchor="start" font-weight="normal" letter-spacing="-0.450" >0.94280</text>
<text x="617.0" y="333" fill="#fff" font-size="10.00" text-anchor="start" font-weight="normal" letter-spacing="-0.450" >0.94190</text>
<text x="617.0" y="366" fill="#fff" font-size="10.00" text-anchor="start" font-weight="normal" letter-spacing="-0.450" >0.94105</text>
<text x="617.0" y="400" fill="#fff" font-size="10.00" text-anchor="start" font-weight="normal" letter-spacing="-0.450" >0.94015</text>
<text x="617.0" y="434" fill="#fff" font-size="10.00" text-anchor="start" font-weight="normal" letter-spacing="-0.450" >0.93930</text>
<text x="617.0" y="467" fill="#fff" font-size="10.00" text-anchor="start" font-weight="normal" letter-spacing="-0.450" >0.93840</text>
<text x="617.0" y="501" fill="#fff" font-size="10.00" text-anchor="start" font-weight="normal" letter-spacing="-0.450" >0.93755</text>
<text x="617.0" y="534" fill="#fff" font-size="10.00" text-anchor="start" font-weight="normal" letter-spacing="-0.450" >0.93665</text>
<text x="617.0" y="567" fill="#fff" font-size="10.00" text-anchor="start" font-weight="normal" letter-spacing="-0.450" >0.93580</text>
<rect x="613" y="189" width="41.3" height="11" fill="#fff"/>
<text x="617.0" y="198" fill="#000" font-size="10.00" text-anchor="start" font-weight="normal" letter-spacing="-0.450" >0.94544</text>
<text x="615.5" y="581" fill="#fff" font-size="10.00" text-anchor="start" font-weight="normal" letter-spacing="-0.464" >0.004026</text>
<text x="615.0" y="680" fill="#fff" font-size="10.00" text-anchor="start" font-weight="normal" letter-spacing="-0.491" >0.00</text>
<svg x="612" y="690" width="42.5" height="20"><text x="4" y="16" fill="#fff" font-size="10.00" letter-spacing="-0.338">-0.001231</text></svg>
<text x="10.0" y="722" fill="#fff" font-size="10.00" text-anchor="start" font-weight="normal" letter-spacing="-0.428" >21 Jul 2014</text>
<text x="74.0" y="722" fill="#fff" font-size="10.00" text-anchor="start" font-weight="normal" letter-spacing="-0.374" >22 Jul 03:45</text>
<text x="138.0" y="722" fill="#fff" font-size="10.00" text-anchor="start" font-weight="normal" letter-spacing="-0.312" >22 Jul 11:45</text>
<text x="202.0" y="722" fill="#fff" font-size="10.00" text-anchor="start" font-weight="normal" letter-spacing="-0.374" >22 Jul 19:45</text>
<text x="266.0" y="722" fill="#fff" font-size="10.00" text-anchor="start" font-weight="normal" letter-spacing="-0.374" >23 Jul 03:45</text>
<text x="330.0" y="722" fill="#fff" font-size="10.00" text-anchor="start" font-weight="normal" letter-spacing="-0.312" >23 Jul 11:45</text>
<text x="394.0" y="722" fill="#fff" font-size="10.00" text-anchor="start" font-weight="normal" letter-spacing="-0.374" >23 Jul 19:45</text>
<text x="458.0" y="722" fill="#fff" font-size="10.00" text-anchor="start" font-weight="normal" letter-spacing="-0.374" >24 Jul 03:45</text>
<path d="M14 115 H22 L18 119.5 Z" fill="#fff"/>
<text x="26.7" y="119" fill="#fff" font-size="10.00" text-anchor="start" font-weight="normal" letter-spacing="-0.347" >AUDUSD,M15  0.94532 0.94545 0.94532 0.94544</text>
<text x="15.0" y="583" fill="#fff" font-size="10.00" text-anchor="start" font-weight="normal" letter-spacing="-0.304" >AO_Zotik 0.000648</text>
<path d="M484 108 H495 L489.5 112.5 Z" fill="#8497a6"/>
<line x1="11" y1="676.5" x2="611" y2="676.5" stroke="#c8c8c8" stroke-width="1" stroke-dasharray="4 3" shape-rendering="crispEdges"/>
<polyline shape-rendering="crispEdges" points="11.0,676.0 29.0,674.7 53.8,675.6 67.0,678.9 76.7,680.0 82.4,678.5 92.0,672.8 109.0,665.5 124.0,665.5 133.8,670.0 147.0,677.5 158.6,680.4 167.0,683.0 172.0,676.6 179.5,674.0 185.0,674.7 192.9,677.5 208.0,680.4 231.0,681.0 237.6,683.0 240.0,680.0 246.0,674.6 256.0,674.6 271.5,680.0 275.5,671.6 280.6,665.9 290.8,660.4 305.0,659.4 313.0,662.9 319.0,663.9 329.4,671.6 339.5,684.8 350.7,681.7 370.0,681.7 382.0,686.4 396.4,683.4 412.7,679.7 426.9,675.7 441.0,678.7 451.0,683.4 463.4,682.0 471.6,675.7 486.8,671.6" fill="none" stroke="#ffff00" stroke-width="1.1"/>
<polyline shape-rendering="crispEdges" points="11.0,687.0 21.4,685.7 32.9,682.9 40.5,683.0 46.0,685.0 55.7,686.0 65.0,689.0 76.7,689.0 86.0,684.0 95.7,676.6 109.0,668.0 118.6,665.5 126.0,662.9 133.8,663.0 143.0,664.8 152.9,665.0 162.4,668.0 168.0,670.0 172.0,663.0 176.7,658.5 181.4,657.0 187.0,661.0 194.8,667.0 202.4,671.0 219.5,672.0 238.6,672.4 247.0,672.6 260.0,675.7 271.5,679.0 273.5,672.6 277.6,661.4 282.7,651.0 290.8,644.0 305.0,639.0 317.0,638.7 323.0,636.0 335.5,636.0 345.6,638.0 353.7,640.7 368.0,645.0 382.0,655.0 388.0,656.8 396.4,657.0 412.7,661.0 426.9,659.0 435.0,665.5 449.0,675.0 457.0,674.6 463.4,677.0 468.5,669.6 475.6,667.0 487.4,666.0" fill="none" stroke="#008000" stroke-width="2.7" stroke-linejoin="round"/>
<polyline shape-rendering="crispEdges" points="11.0,686.0 15.7,681.0 22.4,681.0 29.0,674.0 32.0,674.0 36.7,679.4 41.4,680.4 47.0,691.0 52.9,682.3 59.5,692.8 65.0,697.0 71.0,696.8 76.7,691.8 83.3,684.0 86.0,667.0 92.0,659.4 96.7,646.5 101.0,650.0 110.0,640.0 112.9,640.0 118.6,645.7 122.4,645.7 125.0,638.9 128.5,638.9 132.0,653.7 134.8,661.3 139.5,666.7 143.0,666.7 147.0,665.0 151.0,671.8 156.7,671.8 160.5,681.0 164.0,682.0 167.0,686.0 170.0,671.0 172.9,629.0 175.0,613.7 177.6,619.4 182.4,648.0 186.0,667.0 189.0,682.0 194.8,688.0 201.4,690.9 204.0,688.0 208.0,678.5 210.0,677.5 212.9,679.0 218.6,678.0 225.0,680.4 231.0,677.0 237.6,680.4 240.0,677.7 244.0,674.6 248.0,675.0 253.0,678.7 259.0,678.7 265.4,692.0 269.5,696.0 271.5,692.0 273.5,649.0 276.6,594.4 278.6,578.6 280.6,579.0 285.7,588.0 289.8,602.5 297.9,611.7 303.0,611.7 307.0,616.7 312.0,627.0 315.0,627.0 319.0,616.7 322.0,616.7 327.0,629.0 333.4,635.0 339.5,650.0 344.6,650.9 350.7,656.0 353.7,657.0 358.8,655.0 366.0,663.5 372.0,667.0 378.0,686.8 381.6,689.9 385.0,685.8 392.0,671.6 396.4,671.0 402.5,675.0 408.6,673.6 413.7,671.6 419.8,659.0 426.9,657.0 430.0,663.5 433.0,687.8 436.0,692.0 440.0,694.0 445.0,700.0 450.0,702.0 453.0,696.0 458.0,683.8 460.0,683.8 463.4,692.0 465.5,687.8 468.5,653.0 471.0,637.0 473.6,643.0 479.0,663.5 482.7,662.5 484.8,660.4 487.4,660.4" fill="none" stroke="#ff0000" stroke-width="2.2" stroke-linejoin="round"/>
<svg x="8" y="104" width="606" height="466" viewBox="8 104 606 466">
<g transform="translate(5,5)" filter="url(#shw)" opacity="0.27">
<line x1="78.0" y1="556.0" x2="612.0" y2="347.5" stroke-width="5.2" stroke="#444"/>
</g>
<line x1="78.0" y1="556.0" x2="612.0" y2="347.5" stroke-width="5.2" stroke="#9b6fd3"/>
<g transform="translate(5,5)" filter="url(#shw)" opacity="0.27">
<line x1="281.5" y1="307.0" x2="613.0" y2="235.5" stroke-width="5.2" stroke="#444"/>
</g>
<line x1="281.5" y1="307.0" x2="613.0" y2="235.5" stroke-width="5.2" stroke="#9b6fd3"/>
<g transform="translate(4,5)" filter="url(#shw)" opacity="0.4"><line x1="297" y1="292.5" x2="609" y2="292.5" stroke="#555" stroke-width="4.6"/></g>
<line x1="297" y1="292.5" x2="609" y2="292.5" stroke="#ff9a00" stroke-width="4.6"/>
<circle cx="297.5" cy="292.5" r="5.2" fill="#ff9a00"/>
<g transform="translate(5,5)" filter="url(#shw)" opacity="0.27">
<line x1="59.8" y1="548.5" x2="167.2" y2="345.1" stroke-width="3.1" stroke="#444"/>
<path d="M172.8 334.5 L172.5 350.1 L160.1 343.6 Z" fill="#444"/>
</g>
<line x1="59.8" y1="548.5" x2="167.2" y2="345.1" stroke-width="3.1" stroke="#cc0000"/>
<path d="M172.8 334.5 L172.5 350.1 L160.1 343.6 Z" fill="#cc0000"/>
<g transform="translate(5,5)" filter="url(#shw)" opacity="0.27">
<line x1="178.0" y1="349.0" x2="255.4" y2="465.5" stroke-width="3.1" stroke="#444"/>
<path d="M262.0 475.5 L248.4 467.7 L260.1 460.0 Z" fill="#444"/>
</g>
<line x1="178.0" y1="349.0" x2="255.4" y2="465.5" stroke-width="3.1" stroke="#cc0000"/>
<path d="M262.0 475.5 L248.4 467.7 L260.1 460.0 Z" fill="#cc0000"/>
<g transform="translate(5,5)" filter="url(#shw)" opacity="0.27">
<line x1="269.5" y1="466.0" x2="464.3" y2="144.1" stroke-width="3.1" stroke="#444"/>
<path d="M470.5 133.8 L469.2 149.4 L457.3 142.2 Z" fill="#444"/>
</g>
<line x1="269.5" y1="466.0" x2="464.3" y2="144.1" stroke-width="3.1" stroke="#cc0000"/>
<path d="M470.5 133.8 L469.2 149.4 L457.3 142.2 Z" fill="#cc0000"/>
<g transform="translate(5,5)" filter="url(#shw)" opacity="0.27">
<line x1="471.0" y1="139.5" x2="575.8" y2="335.4" stroke-width="3.1" stroke="#444"/>
<path d="M581.5 346.0 L568.7 337.0 L581.1 330.4 Z" fill="#444"/>
</g>
<line x1="471.0" y1="139.5" x2="575.8" y2="335.4" stroke-width="3.1" stroke="#cc0000"/>
<path d="M581.5 346.0 L568.7 337.0 L581.1 330.4 Z" fill="#cc0000"/>
<path transform="translate(120.0,425.0)" d="M2.3 0 H11 V7.5 L8.3 10.5 L7.3 5.8 L2 10.8 L0 8.5 L5 3.6 L0.3 2.8 Z" fill="#ff0000"/>
<path transform="translate(308.0,261.0)" d="M2.3 0 H11 V7.5 L8.3 10.5 L7.3 5.8 L2 10.8 L0 8.5 L5 3.6 L0.3 2.8 Z" fill="#ff0000"/>
</svg>
<g shape-rendering="crispEdges">
<path d="M674.5 110.5 H1230.5 V492.5 H674.5 Z" fill="none" stroke="#000"/>
<path d="M674.5 494.5 H1230.5 V600.5 H674.5 Z" fill="none" stroke="#000"/>
<path d="M674.5 602.5 H1230.5 V708.5 H674.5 Z" fill="none" stroke="#000"/>
<line x1="717.5" y1="110" x2="717.5" y2="492" stroke="#000" stroke-dasharray="3 3"/>
<line x1="717.5" y1="494" x2="717.5" y2="600" stroke="#000" stroke-dasharray="3 3"/>
<line x1="717.5" y1="602" x2="717.5" y2="708" stroke="#000" stroke-dasharray="3 3"/>
<line x1="765.5" y1="110" x2="765.5" y2="492" stroke="#000" stroke-dasharray="3 3"/>
<line x1="765.5" y1="494" x2="765.5" y2="600" stroke="#000" stroke-dasharray="3 3"/>
<line x1="765.5" y1="602" x2="765.5" y2="708" stroke="#000" stroke-dasharray="3 3"/>
<line x1="813.5" y1="110" x2="813.5" y2="492" stroke="#000" stroke-dasharray="3 3"/>
<line x1="813.5" y1="494" x2="813.5" y2="600" stroke="#000" stroke-dasharray="3 3"/>
<line x1="813.5" y1="602" x2="813.5" y2="708" stroke="#000" stroke-dasharray="3 3"/>
<line x1="861.5" y1="110" x2="861.5" y2="492" stroke="#000" stroke-dasharray="3 3"/>
<line x1="861.5" y1="494" x2="861.5" y2="600" stroke="#000" stroke-dasharray="3 3"/>
<line x1="861.5" y1="602" x2="861.5" y2="708" stroke="#000" stroke-dasharray="3 3"/>
<line x1="909.5" y1="110" x2="909.5" y2="492" stroke="#000" stroke-dasharray="3 3"/>
<line x1="909.5" y1="494" x2="909.5" y2="600" stroke="#000" stroke-dasharray="3 3"/>
<line x1="909.5" y1="602" x2="909.5" y2="708" stroke="#000" stroke-dasharray="3 3"/>
<line x1="957.5" y1="110" x2="957.5" y2="492" stroke="#000" stroke-dasharray="3 3"/>
<line x1="957.5" y1="494" x2="957.5" y2="600" stroke="#000" stroke-dasharray="3 3"/>
<line x1="957.5" y1="602" x2="957.5" y2="708" stroke="#000" stroke-dasharray="3 3"/>
<line x1="1005.5" y1="110" x2="1005.5" y2="492" stroke="#000" stroke-dasharray="3 3"/>
<line x1="1005.5" y1="494" x2="1005.5" y2="600" stroke="#000" stroke-dasharray="3 3"/>
<line x1="1005.5" y1="602" x2="1005.5" y2="708" stroke="#000" stroke-dasharray="3 3"/>
<line x1="1053.5" y1="110" x2="1053.5" y2="492" stroke="#000" stroke-dasharray="3 3"/>
<line x1="1053.5" y1="494" x2="1053.5" y2="600" stroke="#000" stroke-dasharray="3 3"/>
<line x1="1053.5" y1="602" x2="1053.5" y2="708" stroke="#000" stroke-dasharray="3 3"/>
<line x1="1101.5" y1="110" x2="1101.5" y2="492" stroke="#000" stroke-dasharray="3 3"/>
<line x1="1101.5" y1="494" x2="1101.5" y2="600" stroke="#000" stroke-dasharray="3 3"/>
<line x1="1101.5" y1="602" x2="1101.5" y2="708" stroke="#000" stroke-dasharray="3 3"/>
<line x1="1149.5" y1="110" x2="1149.5" y2="492" stroke="#000" stroke-dasharray="3 3"/>
<line x1="1149.5" y1="494" x2="1149.5" y2="600" stroke="#000" stroke-dasharray="3 3"/>
<line x1="1149.5" y1="602" x2="1149.5" y2="708" stroke="#000" stroke-dasharray="3 3"/>
<line x1="675" y1="170.5" x2="1230" y2="170.5" stroke="#8497a6"/>
<path d="M675.5 343V362M677.5 327V355M679.5 333V346M681.5 325V339M683.5 323V341M685.5 326V343M687.5 323V341M689.5 317V347M691.5 292V322M693.5 304V321M695.5 300V319M697.5 298V308M699.5 294V317M701.5 285V306M703.5 294V367M705.5 347V366M707.5 344V358M709.5 342V357M711.5 335V347M713.5 329V343M715.5 323V336M717.5 327V364M719.5 337V357M721.5 333V353M723.5 316V351M725.5 303V333M727.5 302V317M729.5 304V320M731.5 311V323M733.5 298V319M735.5 299V325M737.5 308V325M739.5 316V328M741.5 314V334M743.5 309V322M745.5 299V320M747.5 298V325M749.5 313V335M751.5 317V334M753.5 318V327M755.5 327V339M757.5 327V339M759.5 327V332M761.5 315V330M763.5 314V328M765.5 319V329M767.5 317V327M769.5 317V330M771.5 318V341M773.5 302V348M775.5 314V323M777.5 312V322M779.5 311V321M781.5 319V344M783.5 338V391M785.5 375V394M787.5 370V390M789.5 376V405M791.5 372V398M793.5 364V380M795.5 357V385M797.5 356V376M799.5 308V433M801.5 368V416M803.5 383V401M805.5 379V394M807.5 364V390M809.5 362V382M811.5 368V405M813.5 373V408M815.5 368V390M817.5 376V413M819.5 394V415M821.5 395V419M823.5 376V464M825.5 444V465M827.5 447V475M829.5 451V482M831.5 443V474M833.5 419V453M835.5 425V457M837.5 431V446M839.5 429V440M841.5 426V438M843.5 417V449M845.5 401V422M847.5 389V416M849.5 392V405M851.5 389V408M853.5 392V403M855.5 390V404M857.5 389V402M859.5 384V391M861.5 386V412M863.5 390V402M865.5 379V394M867.5 382V403M869.5 396V422M871.5 396V418M873.5 403V412M875.5 382V417M877.5 351V394M879.5 362V386M881.5 369V390M883.5 362V379M885.5 363V378M887.5 362V388M889.5 359V380M891.5 331V376M893.5 327V358M895.5 344V379M897.5 356V386M899.5 357V379M901.5 346V365M903.5 349V366M905.5 359V422M907.5 406V451M909.5 427V455M911.5 433V463M913.5 433V465M915.5 434V458M917.5 419V459M919.5 397V430M921.5 388V409M923.5 396V405M925.5 388V405M927.5 371V387M929.5 330V388M931.5 338V349M933.5 337V360M935.5 341V353M937.5 333V347M939.5 286V342M941.5 342V391M943.5 341V375M945.5 338V357M947.5 328V349M949.5 312V338M951.5 308V326M953.5 309V326M955.5 312V367M957.5 303V330M959.5 307V324M961.5 306V323M963.5 313V343M965.5 335V344M967.5 325V342M969.5 318V335M971.5 310V330M973.5 320V334M975.5 322V338M977.5 313V344M979.5 333V346M981.5 340V369M983.5 348V356M985.5 350V377M987.5 346V359M989.5 348V367M991.5 352V377M993.5 365V376M995.5 365V374M997.5 360V371M999.5 353V372M1001.5 355V372M1003.5 361V396M1005.5 363V400M1007.5 372V391M1009.5 383V398M1011.5 376V401M1013.5 363V395M1015.5 356V365M1017.5 319V370M1019.5 329V354M1021.5 325V340M1023.5 321V341M1025.5 303V342M1027.5 330V343M1029.5 320V340M1031.5 325V340M1033.5 331V347M1035.5 250V355M1037.5 254V303M1039.5 290V337M1041.5 325V341M1043.5 333V343M1045.5 314V337M1047.5 319V329M1049.5 319V331M1051.5 316V325M1053.5 315V327M1055.5 318V333M1057.5 320V336M1059.5 333V354M1061.5 209V351M1063.5 213V231M1065.5 220V242M1067.5 220V233M1069.5 214V228M1071.5 202V230M1073.5 185V212M1075.5 185V203M1077.5 182V194M1079.5 178V191M1081.5 170V188M1083.5 175V185M1085.5 176V193M1087.5 184V213M1089.5 182V209M1091.5 178V189M1093.5 177V188M1095.5 177V187M1097.5 158V184M1099.5 153V177M1101.5 157V209M1103.5 195V216M1105.5 202V218M1107.5 185V211M1109.5 131V217M1111.5 139V176M1113.5 162V182M1115.5 163V173" stroke="#00ff00" stroke-width="1" fill="none"/>
<line x1="1231" y1="121.8" x2="1233" y2="121.8" stroke="#000"/>
<line x1="1231" y1="155.3" x2="1233" y2="155.3" stroke="#000"/>
<line x1="1231" y1="188.8" x2="1233" y2="188.8" stroke="#000"/>
<line x1="1231" y1="221.8" x2="1233" y2="221.8" stroke="#000"/>
<line x1="1231" y1="254.7" x2="1233" y2="254.7" stroke="#000"/>
<line x1="1231" y1="288.8" x2="1233" y2="288.8" stroke="#000"/>
<line x1="1231" y1="321.8" x2="1233" y2="321.8" stroke="#000"/>
<line x1="1231" y1="355.3" x2="1233" y2="355.3" stroke="#000"/>
<line x1="1231" y1="388.8" x2="1233" y2="388.8" stroke="#000"/>
<line x1="1231" y1="422.3" x2="1233" y2="422.3" stroke="#000"/>
<line x1="1231" y1="455.8" x2="1233" y2="455.8" stroke="#000"/>
<line x1="1231" y1="489.3" x2="1233" y2="489.3" stroke="#000"/>
<line x1="1231" y1="552.5" x2="1233" y2="552.5" stroke="#000"/>
<line x1="1231" y1="624.2" x2="1233" y2="624.2" stroke="#000"/>
<line x1="1231" y1="655.2" x2="1233" y2="655.2" stroke="#000"/>
<line x1="1231" y1="687.2" x2="1233" y2="687.2" stroke="#000"/>
<line x1="675.5" y1="709" x2="675.5" y2="712" stroke="#000"/>
<line x1="739.5" y1="709" x2="739.5" y2="712" stroke="#000"/>
<line x1="803.5" y1="709" x2="803.5" y2="712" stroke="#000"/>
<line x1="867.5" y1="709" x2="867.5" y2="712" stroke="#000"/>
<line x1="931.5" y1="709" x2="931.5" y2="712" stroke="#000"/>
<line x1="995.5" y1="709" x2="995.5" y2="712" stroke="#000"/>
<line x1="1059.5" y1="709" x2="1059.5" y2="712" stroke="#000"/>
<line x1="1123.5" y1="709" x2="1123.5" y2="712" stroke="#000"/>
<line x1="676" y1="624.5" x2="1230" y2="624.5" stroke="#000" stroke-dasharray="18 6"/>
<line x1="676" y1="655.5" x2="1230" y2="655.5" stroke="#000" stroke-dasharray="18 6"/>
<line x1="676" y1="687.5" x2="1230" y2="687.5" stroke="#000" stroke-dasharray="18 6"/>
<line x1="676" y1="553.5" x2="1230" y2="553.5" stroke="#c0c0c0" stroke-dasharray="3 3"/>
</g>
<text x="1236.0" y="124" fill="#000" font-size="10.00" text-anchor="start" font-weight="normal" letter-spacing="-0.450" >0.94740</text>
<text x="1236.0" y="158" fill="#000" font-size="10.00" text-anchor="start" font-weight="normal" letter-spacing="-0.450" >0.94605</text>
<text x="1236.0" y="191" fill="#000" font-size="10.00" text-anchor="start" font-weight="normal" letter-spacing="-0.450" >0.94470</text>
<text x="1236.0" y="224" fill="#000" font-size="10.00" text-anchor="start" font-weight="normal" letter-spacing="-0.450" >0.94340</text>
<text x="1236.0" y="257" fill="#000" font-size="10.00" text-anchor="start" font-weight="normal" letter-spacing="-0.450" >0.94205</text>
<text x="1236.0" y="291" fill="#000" font-size="10.00" text-anchor="start" font-weight="normal" letter-spacing="-0.450" >0.94070</text>
<text x="1236.0" y="324" fill="#000" font-size="10.00" text-anchor="start" font-weight="normal" letter-spacing="-0.450" >0.93935</text>
<text x="1236.0" y="358" fill="#000" font-size="10.00" text-anchor="start" font-weight="normal" letter-spacing="-0.450" >0.93800</text>
<text x="1236.0" y="391" fill="#000" font-size="10.00" text-anchor="start" font-weight="normal" letter-spacing="-0.450" >0.93665</text>
<text x="1236.0" y="425" fill="#000" font-size="10.00" text-anchor="start" font-weight="normal" letter-spacing="-0.450" >0.93530</text>
<text x="1236.0" y="458" fill="#000" font-size="10.00" text-anchor="start" font-weight="normal" letter-spacing="-0.450" >0.93395</text>
<text x="1236.0" y="492" fill="#000" font-size="10.00" text-anchor="start" font-weight="normal" letter-spacing="-0.450" >0.93260</text>
<rect x="1232" y="164" width="38" height="11" fill="#000"/>
<text x="1236.0" y="173" fill="#fff" font-size="10.00" text-anchor="start" font-weight="normal" letter-spacing="-0.450" >0.94544</text>
<svg x="1231" y="494" width="39" height="14"><text x="3.2" y="11" fill="#000" font-size="10.00" letter-spacing="-0.351">0.004797</text></svg>
<text x="1234.5" y="556" fill="#000" font-size="10.00" text-anchor="start" font-weight="normal" letter-spacing="-0.491" >0.00</text>
<text x="1233.8" y="556" fill="#000" font-size="10.00" text-anchor="start" font-weight="normal" >0</text>
<text x="1234.5" y="597" fill="#000" font-size="10.00" text-anchor="start" font-weight="normal" letter-spacing="-0.435" >-0.00390</text>
<text x="1233.2" y="613" fill="#000" font-size="10.00" text-anchor="start" font-weight="normal" letter-spacing="-0.528" >0</text>
<text x="1233.2" y="627" fill="#000" font-size="10.00" text-anchor="start" font-weight="normal" letter-spacing="-0.458" >-20</text>
<text x="1233.2" y="658" fill="#000" font-size="10.00" text-anchor="start" font-weight="normal" letter-spacing="-0.458" >-50</text>
<text x="1233.2" y="690" fill="#000" font-size="10.00" text-anchor="start" font-weight="normal" letter-spacing="-0.458" >-80</text>
<text x="1233.2" y="705" fill="#000" font-size="10.00" text-anchor="start" font-weight="normal" letter-spacing="-0.475" >-100</text>
<text x="674.5" y="721" fill="#000" font-size="10.00" text-anchor="start" font-weight="normal" letter-spacing="-0.361" >11 Jul 2014</text>
<text x="738.5" y="721" fill="#000" font-size="10.00" text-anchor="start" font-weight="normal" letter-spacing="-0.312" >14 Jul 11:00</text>
<text x="802.5" y="721" fill="#000" font-size="10.00" text-anchor="start" font-weight="normal" letter-spacing="-0.374" >15 Jul 19:00</text>
<text x="866.5" y="721" fill="#000" font-size="10.00" text-anchor="start" font-weight="normal" letter-spacing="-0.374" >17 Jul 03:00</text>
<text x="930.5" y="721" fill="#000" font-size="10.00" text-anchor="start" font-weight="normal" letter-spacing="-0.312" >18 Jul 11:00</text>
<text x="994.5" y="721" fill="#000" font-size="10.00" text-anchor="start" font-weight="normal" letter-spacing="-0.374" >21 Jul 19:00</text>
<text x="1058.5" y="721" fill="#000" font-size="10.00" text-anchor="start" font-weight="normal" letter-spacing="-0.374" >23 Jul 03:00</text>
<path d="M678 117 H686 L682 121.5 Z" fill="#000"/>
<text x="691.0" y="122" fill="#000" font-size="10.00" text-anchor="start" font-weight="normal" letter-spacing="-0.340" >AUDUSD,H1  0.94564 0.94573 0.94532 0.94544</text>
<text x="679.5" y="507" fill="#000" font-size="10.00" text-anchor="start" font-weight="normal" letter-spacing="-0.363" >AO_Zotik 0.002104</text>
<text x="679.5" y="615" fill="#000" font-size="10.00" text-anchor="start" font-weight="normal" letter-spacing="-0.287" >WPR_VSmark(21|55|77|277) -11.6608</text>
<path d="M1110.5 111 H1121 L1115.8 116 Z" fill="#708090"/>
<polyline shape-rendering="crispEdges" points="675.0,555.4 688.0,552.0 698.4,546.5 704.5,546.5 718.7,552.0 728.9,553.0 753.0,551.5 779.7,551.0 789.8,557.6 814.0,558.0 828.4,559.5 842.6,556.6 850.8,551.0 867.0,547.9 883.0,544.8 891.4,544.4 903.6,549.0 913.7,555.4 919.8,556.6 932.0,554.0 946.4,552.0 958.6,547.9 972.8,546.9 983.0,553.4 997.0,559.0 1011.4,560.5 1019.5,558.0 1037.8,550.0 1058.0,547.9 1070.3,544.4 1086.6,544.4 1098.7,545.9 1110.9,549.0 1115.0,550.5" fill="none" stroke="#000" stroke-width="1"/>
<polyline shape-rendering="crispEdges" points="675.0,556.6 684.0,554.6 700.4,551.0 708.6,554.0 724.8,554.6 735.0,552.0 753.0,551.3 769.5,552.0 779.7,551.3 789.8,559.0 802.0,561.5 818.0,563.0 830.4,569.0 842.6,569.6 854.8,564.0 867.0,560.0 883.0,556.0 895.4,551.0 903.6,550.5 911.7,556.0 917.8,558.7 928.0,554.6 938.3,549.5 944.4,548.5 960.6,542.4 974.8,542.8 989.0,547.9 1003.3,552.0 1011.4,555.0 1017.5,554.0 1029.7,550.0 1039.8,545.9 1052.0,545.3 1059.0,546.5 1066.0,539.8 1076.4,531.6 1084.5,527.0 1098.7,526.0 1106.9,528.6 1115.0,527.6" fill="none" stroke="#008000" stroke-width="2.2" stroke-linejoin="round"/>
<polyline shape-rendering="crispEdges" points="675.0,560.0 678.0,562.7 684.0,557.0 692.0,549.0 696.4,539.8 701.5,536.3 704.5,544.8 709.6,559.0 714.7,555.0 721.8,560.0 726.8,549.0 731.0,544.8 737.0,544.8 742.0,550.0 745.0,547.9 749.0,547.9 753.0,553.0 758.0,556.0 762.4,554.6 767.5,550.5 773.6,552.0 779.7,551.0 782.7,557.0 785.7,571.0 788.8,579.4 792.0,579.4 796.0,570.0 800.0,569.6 805.0,575.0 810.0,568.0 816.0,568.0 821.0,571.0 824.0,579.4 828.4,593.6 831.5,594.6 836.5,579.4 842.6,571.0 846.7,559.0 850.8,550.0 861.0,545.0 867.0,544.8 870.0,550.0 874.0,551.5 880.0,536.7 889.0,535.7 894.4,529.6 899.5,538.7 903.6,539.8 906.6,546.9 909.7,571.0 912.7,579.4 915.7,579.4 919.8,571.0 925.0,555.0 929.0,544.8 933.0,533.7 937.0,533.0 939.0,529.6 942.0,534.7 944.8,542.4 949.5,530.6 952.5,527.6 957.6,530.6 961.6,527.6 966.7,536.7 969.8,537.0 972.8,534.0 976.9,538.7 981.0,549.0 985.0,559.0 990.0,560.0 995.0,566.0 1001.0,565.0 1007.0,571.0 1012.4,572.0 1015.5,567.0 1019.5,551.0 1024.6,542.8 1032.7,543.8 1036.8,530.6 1039.4,528.6 1041.9,533.7 1044.0,544.8 1052.0,541.0 1059.0,545.9 1062.0,530.6 1066.0,504.0 1072.4,504.6 1077.4,500.6 1082.5,501.8 1085.5,505.0 1089.6,515.8 1099.8,515.8 1102.8,523.5 1105.9,535.7 1107.9,537.0 1110.9,529.6 1113.0,526.6 1115.0,527.2" fill="none" stroke="#ff0000" stroke-width="2.2" stroke-linejoin="round"/>
<polyline shape-rendering="crispEdges" points="675.6,663.6 681.0,621.4 683.7,626.8 687.3,636.6 690.0,616.0 693.6,631.0 697.0,616.0 699.0,612.4 700.8,621.4 702.5,652.0 703.4,693.0 705.0,688.0 707.0,692.0 710.6,670.0 713.3,661.0 717.0,680.7 718.7,688.0 720.5,680.7 721.4,688.0 724.0,652.0 726.0,632.0 729.5,648.0 734.0,630.0 737.6,652.0 742.0,634.0 745.3,616.0 747.5,626.7 749.3,643.0 751.0,639.0 754.7,661.0 758.0,655.5 762.0,644.7 765.4,666.0 767.0,657.0 770.0,670.0 771.4,700.0 772.6,657.0 774.4,646.5 777.0,643.8 779.5,650.0 780.7,670.0 782.0,702.0 784.3,691.0 787.0,698.6 789.7,688.0 791.5,677.0 794.0,673.5 797.8,667.0 799.6,673.5 805.0,670.0 807.7,660.0 809.5,666.0 811.3,684.0 814.0,662.7 815.8,661.0 817.6,682.5 821.0,681.6 823.8,702.0 828.3,702.0 831.0,688.0 833.7,677.0 835.5,682.5 839.0,677.0 842.7,657.0 846.3,639.0 849.0,636.6 851.7,630.0 855.3,628.5 858.9,614.0 861.6,623.0 864.3,617.8 867.0,621.4 869.7,628.5 873.3,646.5 876.0,618.7 879.5,633.0 883.0,622.0 887.6,637.5 891.2,608.8 894.8,652.0 897.0,660.0 899.5,636.6 902.0,632.0 904.9,661.0 905.8,700.4 907.6,706.7 910.3,695.0 913.0,691.4 915.7,701.3 918.4,662.7 921.0,661.0 924.6,657.3 928.2,634.0 930.0,619.6 931.8,619.6 933.6,626.8 936.3,617.8 939.9,643.0 941.7,652.0 947.0,634.0 951.0,620.5 954.3,629.5 957.0,627.6 960.6,634.0 964.2,648.3 966.0,653.7 969.6,640.2 973.2,646.5 975.0,643.8 977.7,661.0 979.5,670.0 981.3,667.0 983.4,684.3 985.7,671.7 988.0,670.8 990.2,686.0 991.7,702.0 993.8,690.5 995.6,691.4 997.4,698.6 999.6,677.0 1001.4,697.7 1003.4,707.0 1005.5,684.3 1007.3,696.0 1009.5,704.0 1011.8,691.4 1014.5,657.3 1017.2,646.5 1019.5,618.7 1021.7,621.4 1023.5,610.0 1025.3,639.3 1028.0,634.0 1030.7,636.6 1033.4,637.5 1035.0,612.4 1037.0,628.5 1038.8,644.7 1040.6,659.0 1042.3,662.7 1046.0,653.7 1053.0,653.7 1055.8,666.3 1057.6,673.5 1059.4,698.6 1060.7,623.0 1063.0,610.6 1064.8,617.8 1068.4,613.3 1072.0,607.0 1076.5,606.0 1082.8,607.9 1085.5,616.0 1087.3,625.0 1090.0,610.6 1092.7,613.3 1098.0,607.0 1100.8,621.4 1102.0,657.3 1103.4,675.3 1107.0,661.0 1109.2,614.0 1111.5,641.0 1115.7,652.0" fill="none" stroke="#ff0000" stroke-width="1"/>
<polyline shape-rendering="crispEdges" points="737.6,668.0 740.3,639.3 745.3,621.4 747.5,632.0 751.0,635.7 754.7,649.0 760.0,643.0 761.3,636.6 764.5,652.0 767.2,646.5 770.0,669.0 771.4,671.7 773.5,650.0 776.2,645.0 779.5,650.0 780.7,670.0 783.0,705.0 786.0,692.0 789.7,701.0" fill="none" stroke="#1e90ff" stroke-width="1"/>
<polyline shape-rendering="crispEdges" points="840.0,681.0 844.5,669.0 849.0,661.8 853.5,660.0 858.9,653.3 861.6,658.2 865.2,655.5 873.3,666.3 876.8,641.0 879.5,646.5 885.0,641.0 888.5,643.8 891.2,619.6 895.7,644.7 899.3,632.0 902.0,630.3 904.9,657.0 906.7,684.0 909.4,685.0 912.0,690.0 913.9,683.0 915.7,686.5 918.4,659.0 921.0,662.0 924.6,653.0 928.2,632.0 930.0,617.0 931.8,617.8 933.6,625.0 936.3,613.3 938.1,616.0 939.9,643.0 942.0,653.7 947.0,634.0 951.0,619.6 954.3,630.0 957.9,621.0 960.6,624.0 965.0,638.0 969.6,625.0 973.2,632.0 975.9,631.0 979.5,642.0 983.0,647.0" fill="none" stroke="#1e90ff" stroke-width="1"/>
<polyline shape-rendering="crispEdges" points="1017.2,643.8 1019.5,632.0 1023.5,629.4 1026.2,638.4 1031.6,648.3 1033.4,646.5 1035.5,625.0 1038.8,648.3 1040.6,661.0 1042.3,662.7 1047.7,652.0 1053.0,651.0 1056.7,661.0 1058.9,668.0 1060.7,617.8 1062.0,609.0 1065.7,612.4 1072.0,607.0 1076.5,606.5" fill="none" stroke="#1e90ff" stroke-width="1"/>
<polyline shape-rendering="crispEdges" points="675.6,687.0 681.0,674.4 685.5,677.0 688.0,673.5 691.8,669.0 693.6,670.0 699.9,661.8 702.5,673.5 704.3,686.0 708.0,683.4 713.3,674.4 718.7,686.0 724.0,673.5 726.8,667.0 729.5,671.7 735.0,665.4 737.6,672.6 743.9,668.0 749.3,672.6 755.6,677.0 762.0,670.8 769.0,673.5 771.7,677.0 774.4,671.7 779.8,670.0 781.6,687.8 783.0,702.0 786.0,691.4 789.7,700.4 791.5,680.7 797.8,677.0 801.4,677.0 805.9,673.5 808.6,662.7 811.3,687.8 814.9,666.3 817.6,684.3 821.0,686.0 823.8,704.0 828.3,702.0 831.0,689.6 832.8,680.7 835.5,687.8 840.0,682.5 844.5,670.0 849.0,663.6 853.5,662.7 858.9,655.5 861.6,660.0 865.2,657.3 873.3,668.0 876.8,644.7 879.5,650.0 885.0,644.7 888.5,646.5 891.2,625.0 895.0,645.6 897.0,647.4 899.5,634.0 902.0,632.0 904.9,657.3 906.7,684.3 909.4,686.0 912.0,691.4 913.9,684.3 915.7,687.8 918.4,661.0 921.0,663.6 924.6,655.5 928.2,635.7 930.0,625.0 932.7,632.0 935.4,623.0 937.2,625.0 939.9,641.0 942.0,652.0 947.0,634.0 951.0,618.7 954.3,628.5 957.9,620.5 960.6,623.0 965.0,636.6 969.6,624.0 973.2,631.2 975.9,629.4 979.5,641.0 983.0,645.6 986.6,643.0 991.0,656.4 995.6,652.0 998.3,654.6 999.6,646.5 1002.8,668.0 1005.5,660.0 1009.0,669.0 1011.8,664.5 1013.6,650.0 1017.2,643.8 1019.5,632.0 1023.5,628.5 1026.2,634.8 1028.9,630.3 1031.6,636.6 1033.4,634.0 1035.5,607.9 1037.9,630.3 1040.6,644.7 1042.3,646.5 1047.7,637.9 1053.0,639.3 1056.7,644.7 1058.9,650.0 1060.7,616.0 1062.0,607.0 1065.7,610.6 1072.0,605.5 1076.5,605.5 1082.8,607.9 1087.3,621.4 1090.0,610.6 1098.0,606.0 1101.6,623.0 1103.4,628.5 1107.0,621.4 1109.2,607.9 1111.5,616.0 1114.6,618.0" fill="none" stroke="#9400d3" stroke-width="1"/>
<polyline shape-rendering="crispEdges" points="675.6,676.5 681.0,670.8 684.6,670.8 687.3,672.6 690.0,667.7 692.7,667.7 697.0,664.8 700.8,664.0 703.4,676.7 708.0,676.7 713.3,672.0 717.8,675.6 722.3,675.6 726.0,666.0 729.5,669.0 734.0,666.0 737.6,670.0 741.0,669.0 745.3,666.6 749.3,670.0 754.7,671.7 760.0,671.3 762.0,669.5 769.0,670.2 771.7,672.0 776.2,668.4 779.8,669.0 782.5,686.0 788.8,686.0 792.4,681.6 796.0,681.6 799.6,686.0 805.0,685.0 808.6,682.5 811.3,687.8 814.0,682.5 817.6,687.0 821.0,689.6 823.0,701.3 825.6,700.4 828.3,703.7 830.0,702.0 832.8,696.0 835.5,698.6 839.0,696.0 841.8,697.0 846.3,689.6 851.7,687.5 858.9,686.0 867.9,687.8 872.4,690.5 876.8,681.6 880.4,682.0 885.0,680.3 889.4,680.7 891.2,672.0 893.9,675.3 895.0,675.3 898.6,670.0 903.0,670.0 904.9,679.0 906.0,696.0 909.4,696.8 913.0,696.0 915.7,698.6 918.4,681.6 922.9,681.6 926.4,675.3 930.0,663.6 932.7,665.4 935.4,661.8 939.0,661.8 941.4,670.0 944.4,664.5 947.0,660.0 949.8,651.5 952.5,654.6 957.0,651.5 960.6,655.5 964.2,660.5 968.7,655.5 974.0,656.4 976.8,658.2 979.5,665.4 983.0,666.3 986.6,664.0 991.0,671.3 995.6,669.0 999.2,668.0 1002.8,677.0 1005.5,675.3 1010.0,678.5 1013.6,670.0 1019.0,661.0 1023.5,657.0 1028.0,659.0 1033.4,658.2 1034.6,635.7 1037.0,636.6 1037.9,652.0 1040.6,660.0 1043.3,660.0 1046.0,655.0 1054.0,655.0 1057.6,660.0 1059.4,661.0 1060.7,621.4 1064.8,622.3 1069.3,620.5 1072.9,612.4 1077.4,609.0 1082.8,607.0 1085.5,611.5 1087.3,616.0 1090.0,609.7 1093.6,610.6 1098.0,606.0 1100.8,612.4 1102.5,622.3 1107.0,617.8 1109.2,607.0 1111.5,613.3 1115.7,616.0" fill="none" stroke="#000" stroke-width="2.6" stroke-linejoin="round"/>
<svg x="675" y="111" width="566" height="382" viewBox="675 111 566 382">
<g transform="translate(5,6)" filter="url(#shw)" opacity="0.38">
<line x1="881.5" y1="334.5" x2="1127.5" y2="113.0" stroke-width="3.6" stroke="#000"/>
</g>
<line x1="881.5" y1="334.5" x2="1127.5" y2="113.0" stroke-width="3.6" stroke="#be0202"/>
<g transform="translate(5,6)" filter="url(#shw)" opacity="0.38">
<line x1="916.8" y1="467.0" x2="1233.6" y2="255.4" stroke-width="3.6" stroke="#000"/>
</g>
<line x1="916.8" y1="467.0" x2="1233.6" y2="255.4" stroke-width="3.6" stroke="#be0202"/>
<g transform="translate(5,6)" filter="url(#shw)" opacity="0.38">
<line x1="907.5" y1="452.7" x2="1110.7" y2="148.6" stroke-width="3.6" stroke="#000"/>
<path d="M1117.5 138.5 L1115.7 154.4 L1103.5 146.2 Z" fill="#000"/>
</g>
<line x1="907.5" y1="452.7" x2="1110.7" y2="148.6" stroke-width="3.6" stroke="#be0202"/>
<path d="M1117.5 138.5 L1115.7 154.4 L1103.5 146.2 Z" fill="#be0202"/>
<g transform="translate(5,6)" filter="url(#shw)" opacity="0.38">
<line x1="1130.5" y1="122.5" x2="1216.8" y2="247.0" stroke-width="3.6" stroke="#000"/>
<path d="M1223.8 257.0 L1209.7 249.5 L1221.7 241.2 Z" fill="#000"/>
</g>
<line x1="1130.5" y1="122.5" x2="1216.8" y2="247.0" stroke-width="3.6" stroke="#be0202"/>
<path d="M1223.8 257.0 L1209.7 249.5 L1221.7 241.2 Z" fill="#be0202"/>
</svg>
</svg>
</body></html>
